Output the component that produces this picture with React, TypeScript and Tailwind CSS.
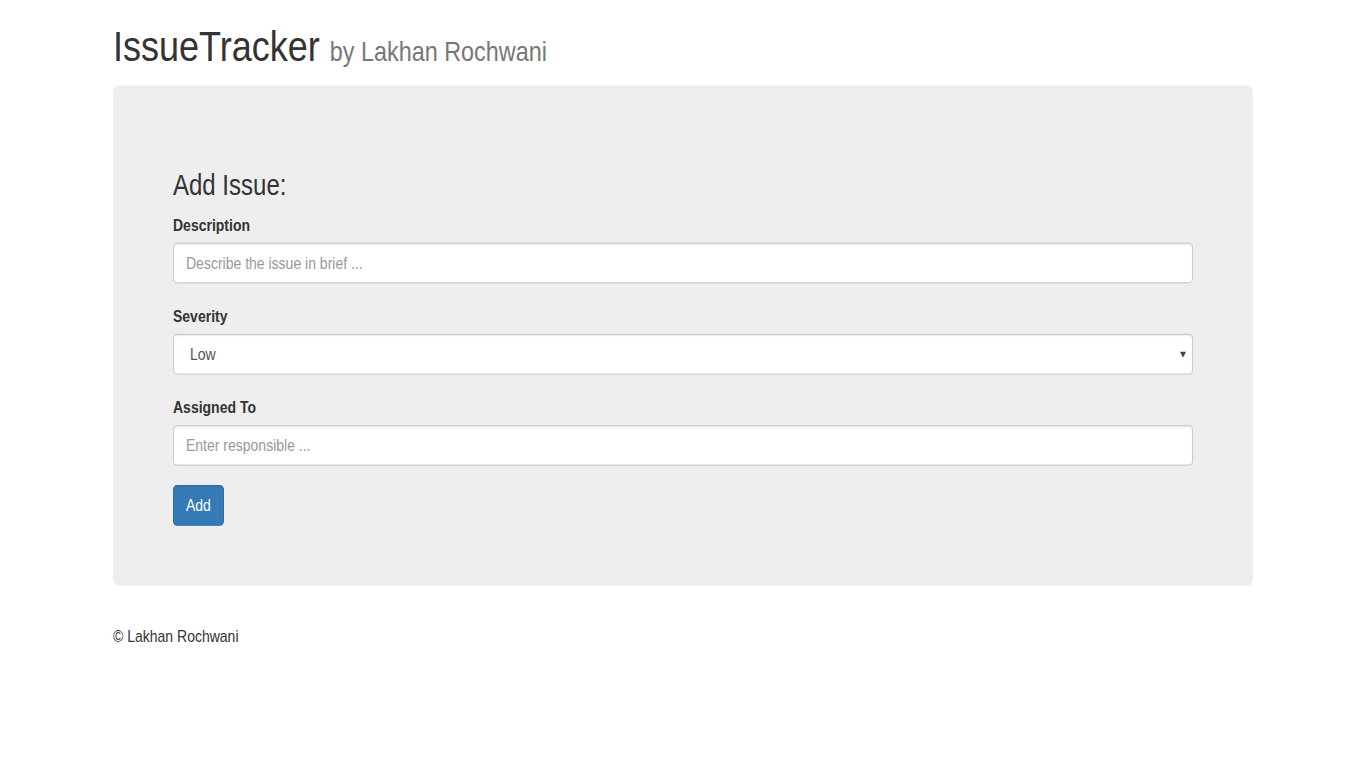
import React from 'react'

// The reference is a Bootstrap 3 page captured with a 1.2x vertical stretch,
// so the page is laid out at Bootstrap sizes and stretched once at the top.
const font = "font-['Liberation_Sans',Arial,sans-serif]"

const inputCls =
  'h-[34px] w-full rounded-[4px] border border-[#ccc] bg-white px-[12px] text-[14px] text-[#555] shadow-[inset_0_1px_1px_rgba(0,0,0,0.075)] outline-none placeholder:text-[#999]'

function Field({ label, children, last }: { label: string; children: React.ReactNode; last?: boolean }) {
  return (
    <div className={last ? 'mb-[16px]' : 'mb-[16.8px]'}>
      <label className="mb-[5px] block text-[14px] leading-[20px] font-bold text-[#333]">{label}</label>
      {children}
    </div>
  )
}

export default function App() {
  return (
    <div className={`${font} min-h-screen w-full bg-white text-[#333]`}>
      <div className="origin-top scale-y-[1.2]">
        <div className="mx-auto w-[1140px]">
          <h1 className="mt-[22.5px] mb-[7px] text-[36px] leading-[39.6px] font-normal text-[#333]">
            IssueTracker{' '}
            <small className="text-[23.4px] font-normal text-[#777]">by Lakhan Rochwani</small>
          </h1>

          <div className="rounded-[6px] bg-[#eee] px-[60px] pt-[70.2px] pb-[50.1px]">
            <h3 className="mb-[10.1px] text-[24px] leading-[26.4px] font-normal text-[#333]">Add Issue:</h3>
            <form onSubmit={(e) => e.preventDefault()}>
              <Field label="Description">
                <input type="text" placeholder="Describe the issue in brief ..." className={inputCls} />
              </Field>
              <Field label="Severity">
                <div className="relative">
                  <select defaultValue="Low" className={`${inputCls} appearance-none pl-[16px] pr-[24px]`}>
                    <option>Low</option>
                    <option>Medium</option>
                    <option>High</option>
                  </select>
                  <span className="pointer-events-none absolute right-[7px] top-[15px] h-0 w-0 border-x-[3px] border-t-[5px] border-x-transparent border-t-[#444]" />
                </div>
              </Field>
              <Field label="Assigned To" last>
                <input type="text" placeholder="Enter responsible ..." className={inputCls} />
              </Field>
              <button
                type="submit"
                className="h-[34px] rounded-[4px] border border-[#2e6da4] bg-[#337ab7] px-[12px] text-[14px] leading-[20px] text-white"
              >
                Add
              </button>
            </form>
          </div>

          <footer className="pt-[31.7px] text-[14px] leading-[20px] text-[#333]">© Lakhan Rochwani</footer>
        </div>
      </div>
    </div>
  )
}
